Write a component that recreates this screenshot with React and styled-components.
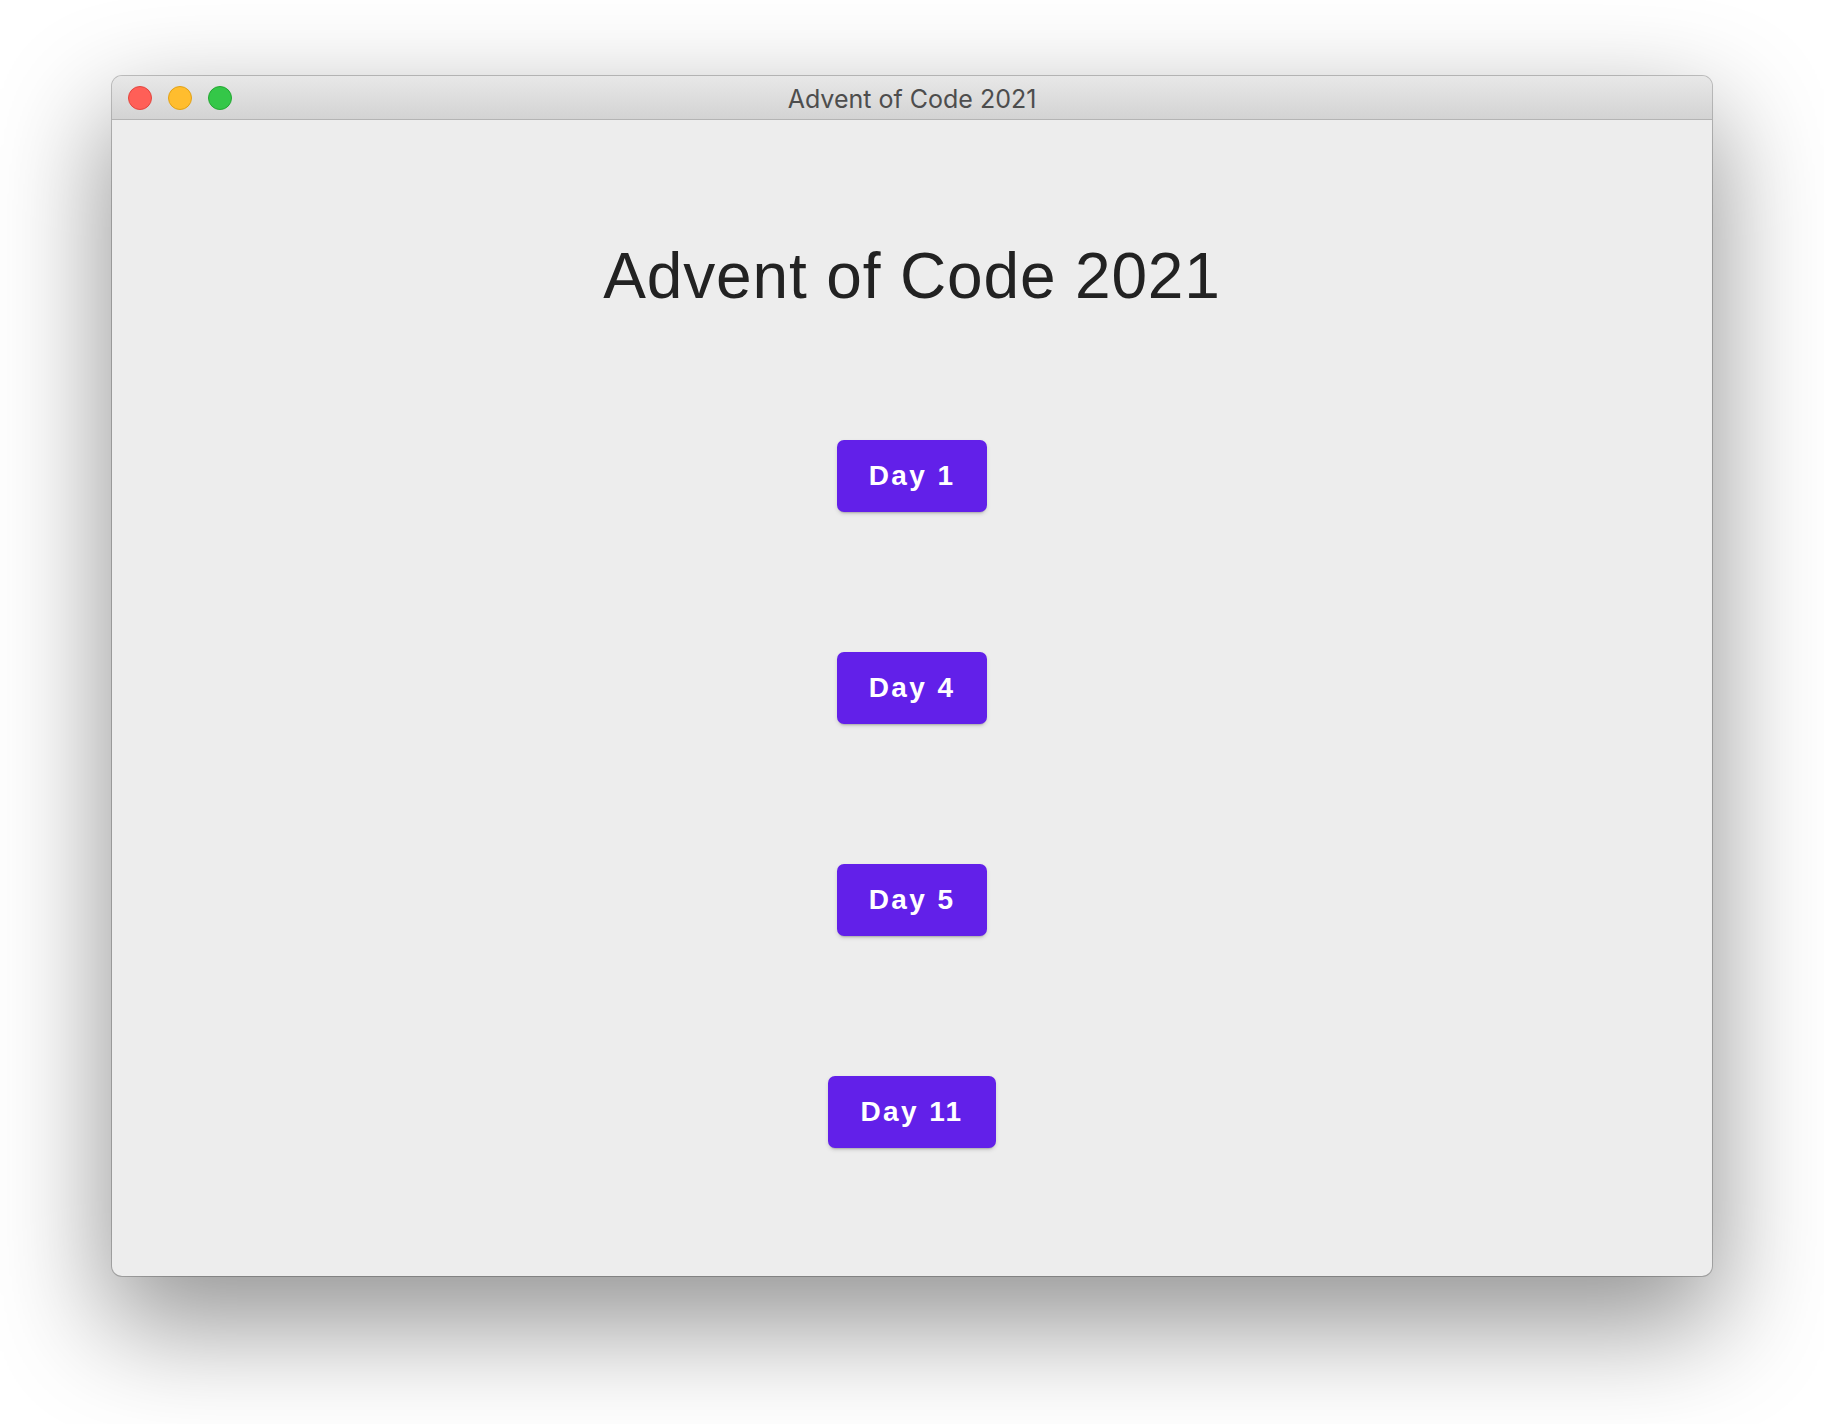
import styled, { createGlobalStyle } from 'styled-components'

const GlobalStyle = createGlobalStyle`
  html, body {
    margin: 0;
    padding: 0;
    background: #ffffff;
  }
  body {
    font-family: "Liberation Sans", Arial, sans-serif;
  }
`

const Stage = styled.div`
  display: flex;
  justify-content: center;
  padding-top: 76px;
  height: 1424px;
  box-sizing: border-box;
`

const Janela = styled.div`
  width: 1600px;
  height: 1200px;
  border-radius: 10px;
  background-color: #ededed;
  box-shadow: 0 0 0 1px rgba(0, 0, 0, 0.22), 0 44px 110px 6px rgba(0, 0, 0, 0.42);
  display: flex;
  flex-direction: column;
  overflow: hidden;
`

const BarraTitulo = styled.div`
  position: relative;
  height: 43px;
  flex-shrink: 0;
  background: linear-gradient(#e8e8e8, #d3d3d3);
  border-bottom: 1px solid #b4b4b4;
  display: flex;
  align-items: center;
  justify-content: center;
`

const Semaforos = styled.div`
  position: absolute;
  left: 16px;
  top: 10px;
  display: flex;
  gap: 16px;
`

const Luz = styled.span`
  width: 22px;
  height: 22px;
  border-radius: 50%;
  background-color: ${props => props.$cor};
  border: 1px solid ${props => props.$borda};
`

const TextoTitulo = styled.span`
  font-family: Inter, "Noto Sans", sans-serif;
  font-size: 25px;
  color: #4d4d4d;
  margin-top: 2px;
`

const Conteudo = styled.div`
  flex: 1;
  display: flex;
  flex-direction: column;
  align-items: center;
  padding-top: 124px;
`

const Titulo = styled.h1`
  margin: 0 0 132px;
  font-family: "Liberation Sans", Arial, sans-serif;
  font-size: 64px;
  line-height: 64px;
  font-weight: 400;
  letter-spacing: 0.85px;
  color: #222222;
`

const ListaDias = styled.div`
  display: flex;
  flex-direction: column;
  align-items: center;
  gap: 140px;
`

const BotaoDia = styled.button`
  height: 72px;
  padding: 0 32px;
  border: none;
  border-radius: 7px;
  background-color: #6220e9;
  color: #fff;
  font-family: "Liberation Sans", Arial, sans-serif;
  font-size: 28px;
  font-weight: 700;
  letter-spacing: 2.4px;
  box-shadow: 0 3px 2px -2px rgba(0, 0, 0, 0.2), 0 2px 4px rgba(0, 0, 0, 0.12);
  display: flex;
  align-items: center;
  justify-content: center;
`

const dias = [1, 4, 5, 11]

function App() {
  return (
    <>
      <GlobalStyle />
      <Stage>
        <Janela>
          <BarraTitulo>
            <Semaforos>
              <Luz $cor="#ff5f57" $borda="#e2463f" />
              <Luz $cor="#ffbd2e" $borda="#e1a116" />
              <Luz $cor="#34c748" $borda="#24a732" />
            </Semaforos>
            <TextoTitulo>Advent of Code 2021</TextoTitulo>
          </BarraTitulo>
          <Conteudo>
            <Titulo>Advent of Code 2021</Titulo>
            <ListaDias>
              {dias.map(dia => (
                <BotaoDia key={dia}>Day {dia}</BotaoDia>
              ))}
            </ListaDias>
          </Conteudo>
        </Janela>
      </Stage>
    </>
  )
}

export default App
